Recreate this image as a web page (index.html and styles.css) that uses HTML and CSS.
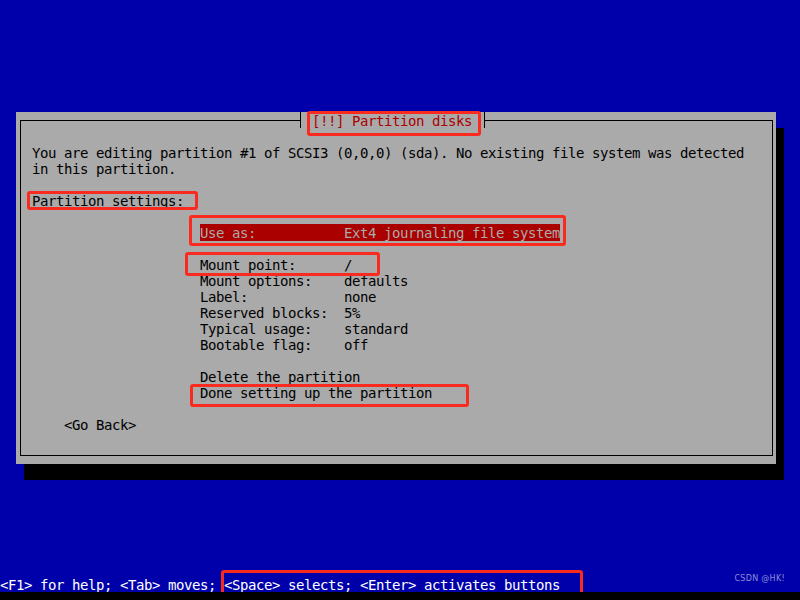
FILE: index.html
```html
<!DOCTYPE html>
<html lang="en">
<head>
  <meta charset="UTF-8" />
  <meta name="viewport" content="width=device-width, initial-scale=1.0"/>
  <title>Partition disks</title>
  <link rel="stylesheet" href="styles.css">
</head>
<body>
  <div class="screen">
    <div class="dialog">
      <div class="frame">
        <div class="title">[!!] Partition disks</div>
        <p class="intro">You are editing partition #1 of SCSI3 (0,0,0) (sda). No existing file system was detected in this partition.</p>
        <p class="heading">Partition settings:</p>

        <div class="settings">
          <div class="opt selected"><span class="key">Use as:</span><span>Ext4 journaling file system</span></div>
          <div class="group">
            <div class="opt"><span class="key">Mount point:</span><span>/</span></div>
            <div class="opt"><span class="key">Mount options:</span><span>defaults</span></div>
            <div class="opt"><span class="key">Label:</span><span>none</span></div>
            <div class="opt"><span class="key">Reserved blocks:</span><span>5%</span></div>
            <div class="opt"><span class="key">Typical usage:</span><span>standard</span></div>
            <div class="opt"><span class="key">Bootable flag:</span><span>off</span></div>
          </div>
          <div class="group">
            <div class="opt">Delete the partition</div>
            <div class="opt">Done setting up the partition</div>
          </div>
        </div>

        <div class="back">&lt;Go Back&gt;</div>
      </div>
    </div>

    <div class="status">&lt;F1&gt; for help; &lt;Tab&gt; moves; &lt;Space&gt; selects; &lt;Enter&gt; activates buttons</div>
    <div class="mark">CSDN @HK!</div>

    <!-- red annotation boxes -->
    <div class="note note-title"></div>
    <div class="note note-heading"></div>
    <div class="note note-use"></div>
    <div class="note note-mount"></div>
    <div class="note note-done"></div>
    <div class="note note-status"></div>
  </div>
</body>
</html>
```

FILE: styles.css
```css
* {
  box-sizing: border-box;
}

body {
  margin: 0;
  padding: 0;
  background: #000;
  font-family: 'DejaVu Sans Mono', 'Liberation Mono', monospace;
  font-size: 14px;
  letter-spacing: -0.4287px;
  line-height: 16px;
}

.screen {
  position: relative;
  width: 800px;
  height: 592px;
  background: #0000aa;
  display: flex;
  flex-direction: column;
}

.dialog {
  margin: 112px 0 0 16px;
  width: 760px;
  height: 352px;
  background: #aaaaaa;
  color: #000;
  box-shadow: 8px 16px 0 #000;
  padding: 8px 3px 8px 4px;
}

.frame {
  position: relative;
  height: 100%;
  border: 1px solid #000;
  padding: 24px 0 0 11px;
}

.title {
  position: absolute;
  top: -9px;
  left: 279px;
  height: 16px;
  padding: 1px 12px 0 11px;
  background: #aaaaaa;
  color: #aa0000;
  border-left: 1px solid #000;
  border-right: 1px solid #000;
}

p {
  margin: 0;
}

.intro {
  width: 720px;
  margin-bottom: 16px;
}

.heading {
  margin-bottom: 16px;
}

.settings {
  margin-left: 168px;
}

.opt {
  display: flex;
  white-space: pre;
}

.key {
  flex: 0 0 144px;
}

.selected {
  width: max-content;
  margin-top: -1px;
  padding-top: 1px;
  background: #aa0000;
  color: #aaaaaa;
}

.group {
  margin-top: 16px;
}

.back {
  margin: 16px 0 0 32px;
}

.status {
  margin-top: auto;
  height: 16px;
  padding-top: 1px;
  color: #fff;
  white-space: pre;
}

.mark {
  position: absolute;
  right: 15px;
  bottom: 5px;
  font-family: 'DejaVu Sans', sans-serif;
  font-size: 8px;
  letter-spacing: 0.3px;
  color: rgba(255, 255, 255, 0.55);
}

.note {
  position: absolute;
  border: 3px solid #fb2a1e;
  border-radius: 3px;
}

.note-title   { left: 307px; top: 111px; width: 174px; height: 25px; }
.note-heading { left: 27px;  top: 191px; width: 171px; height: 19px; }
.note-use     { left: 189px; top: 215px; width: 377px; height: 31px; }
.note-mount   { left: 185px; top: 252px; width: 195px; height: 24px; }
.note-done    { left: 190px; top: 384px; width: 279px; height: 23px; }
.note-status  { left: 221px; top: 570px; width: 362px; height: 28px; }
```
